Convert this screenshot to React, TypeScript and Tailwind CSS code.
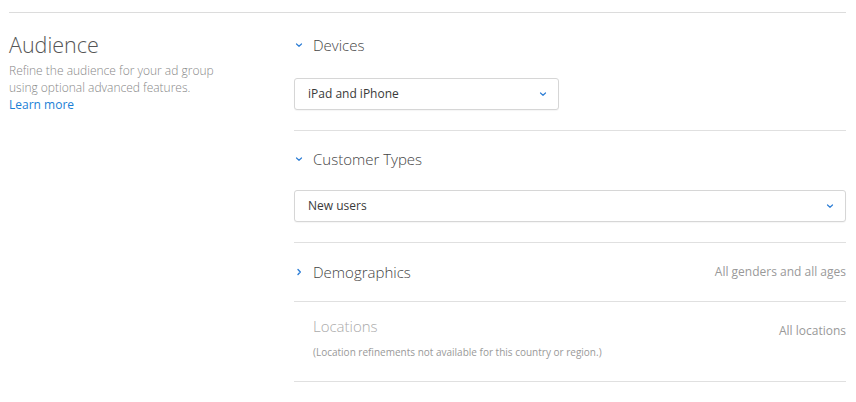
import React from 'react';

const Chevron: React.FC<{ dir?: 'down' | 'right'; className?: string }> = ({ dir = 'down', className }) => (
  <svg width="10" height="10" viewBox="0 0 10 10" className={className}>
    {dir === 'down' ? (
      <path d="M2.5 4 L5 6.3 L7.5 4" fill="none" stroke="#2f7fd6" strokeWidth="1.2" strokeLinecap="round" strokeLinejoin="round" />
    ) : (
      <path d="M4 2.5 L6.3 5 L4 7.5" fill="none" stroke="#2f7fd6" strokeWidth="1.4" strokeLinecap="round" strokeLinejoin="round" />
    )}
  </svg>
);

const Select: React.FC<{ value: string; className?: string }> = ({ value, className }) => (
  <div className={`flex h-[32px] items-center justify-between rounded-[3px] border border-[#d6d6d6] bg-white pl-[13px] pr-[10px] shadow-[0_1px_1px_rgba(0,0,0,0.04)] ${className ?? ''}`}>
    <span className="text-[12px] text-[#3a3a3a]">{value}</span>
    <Chevron />
  </div>
);

export default function App() {
  return (
    <div className="h-[402px] w-[856px] bg-white pt-[12px] font-['Open_Sans',sans-serif]">
      <div className="ml-[9px] mr-[10px] border-t border-[#dcdcdc]" />
      <div className="flex pl-[9px] pr-[10px] pt-[19px]">
        <div className="w-[285px] shrink-0">
          <h2 className="text-[21.5px] font-light leading-[26px] text-[#555]">Audience</h2>
          <p className="mt-[4px] w-[232px] text-[12px] font-light leading-[17px] text-[#888]">
            Refine the audience for your ad group using optional advanced features.
          </p>
          <a className="block text-[12px] leading-[17px] text-[#1a7fd6]">Learn more</a>
        </div>
        <div className="flex-1">
          <div className="border-b border-[#e0e0e0] pb-[20px]">
            <div className="flex h-[26px] items-center gap-[9px]">
              <Chevron />
              <span className="text-[15px] font-light text-[#444]">Devices</span>
            </div>
            <Select value="iPad and iPhone" className="mt-[20px] w-[265px]" />
          </div>
          <div className="border-b border-[#e0e0e0] pb-[20px] pt-[15px]">
            <div className="flex h-[26px] items-center gap-[9px]">
              <Chevron />
              <span className="text-[15px] font-light text-[#444]">Customer Types</span>
            </div>
            <Select value="New users" className="mt-[18px] w-full" />
          </div>
          <div className="flex h-[59px] items-center justify-between border-b border-[#e0e0e0]">
            <div className="flex items-center gap-[9px]">
              <Chevron dir="right" />
              <span className="text-[15px] font-light text-[#444]">Demographics</span>
            </div>
            <span className="text-[12px] text-[#999]">All genders and all ages</span>
          </div>
          <div className="flex h-[80px] items-start justify-between border-b border-[#e0e0e0] pl-[19px] pt-[14px]">
            <div>
              <div className="text-[15px] font-light leading-[20px] text-[#aaa]">Locations</div>
              <div className="mt-[9px] text-[10px] text-[#999]">
                (Location refinements not available for this country or region.)
              </div>
            </div>
            <span className="mt-[6px] text-[12px] text-[#999]">All locations</span>
          </div>
        </div>
      </div>
    </div>
  );
}
